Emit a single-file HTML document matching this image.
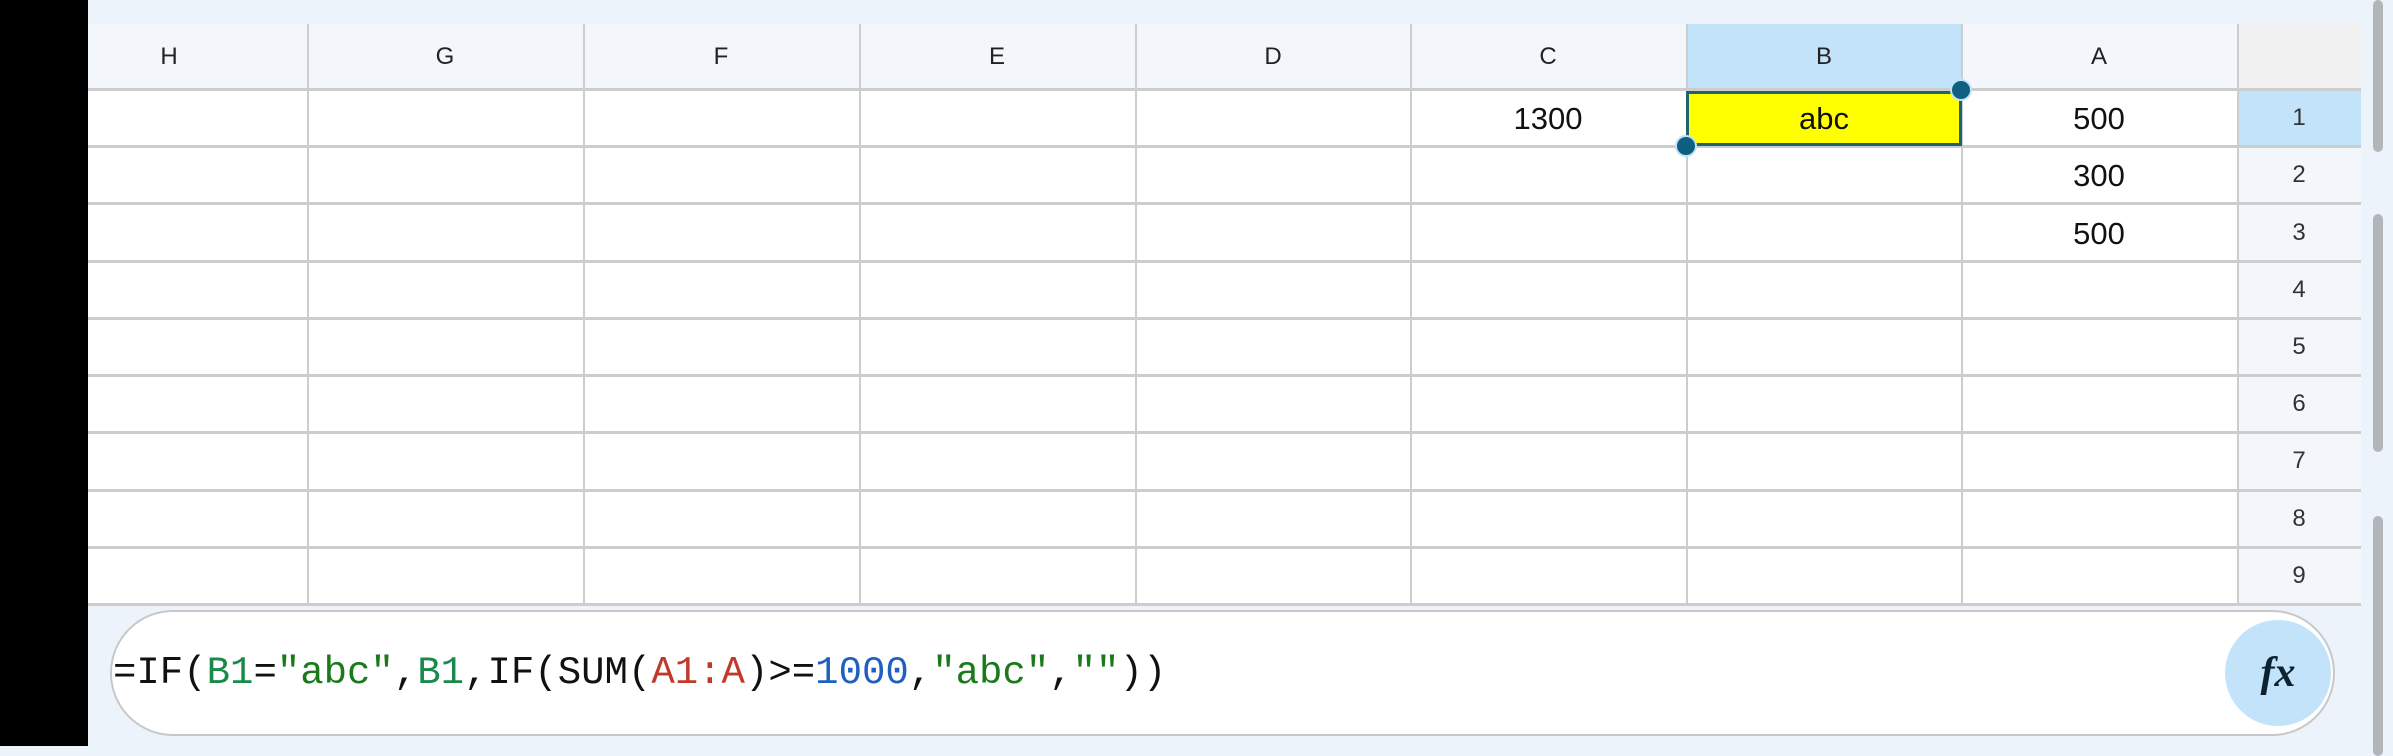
<!DOCTYPE html>
<html><head><style>
*{margin:0;padding:0;box-sizing:border-box}
body{width:2393px;height:746px;overflow:hidden;background:#edf3fb;position:relative;font-family:"Liberation Sans",sans-serif}
.a{position:absolute}
.hl{position:absolute;left:88px;width:2273px;height:3px;background:#cdcdcd}
.vl{position:absolute;top:24px;height:581px;width:2px;background:#cdcdcd}
.ch{position:absolute;top:24px;height:65px;line-height:65px;text-align:center;font-size:24px;color:#222;width:276px}
.rh{position:absolute;left:2237px;width:124px;text-align:center;font-size:24px;color:#333;height:57px;line-height:57px}
.cv{position:absolute;width:276px;text-align:center;font-size:31px;color:#111;height:57px;line-height:57px}
</style></head><body>
<div class="a" style="left:0;top:0;width:88px;height:746px;background:#000"></div>
<div class="a" style="left:88px;top:24px;width:2149px;height:65px;background:#f3f7fc"></div>
<div class="a" style="left:1686px;top:24px;width:275px;height:65px;background:#c3e3fb"></div>
<div class="a" style="left:88px;top:89px;width:2149px;height:516px;background:#fff"></div>
<div class="a" style="left:2237px;top:24px;width:124px;height:65px;background:#f1f1f1"></div>
<div class="a" style="left:2237px;top:89px;width:124px;height:516px;background:#f3f7fc"></div>
<div class="a" style="left:2237px;top:89px;width:124px;height:57px;background:#c3e3fb"></div>

<div class="ch" style="left:31px">H</div>
<div class="ch" style="left:307px">G</div>
<div class="ch" style="left:583px">F</div>
<div class="ch" style="left:859px">E</div>
<div class="ch" style="left:1135px">D</div>
<div class="ch" style="left:1410px">C</div>
<div class="ch" style="left:1686px">B</div>
<div class="ch" style="left:1961px">A</div>

<div class="hl" style="top:88px"></div>
<div class="hl" style="top:145px"></div>
<div class="hl" style="top:202px"></div>
<div class="hl" style="top:260px"></div>
<div class="hl" style="top:317px"></div>
<div class="hl" style="top:374px"></div>
<div class="hl" style="top:431px"></div>
<div class="hl" style="top:489px"></div>
<div class="hl" style="top:546px"></div>
<div class="hl" style="top:603px"></div>
<div class="vl" style="left:307px"></div>
<div class="vl" style="left:583px"></div>
<div class="vl" style="left:859px"></div>
<div class="vl" style="left:1135px"></div>
<div class="vl" style="left:1410px"></div>
<div class="vl" style="left:1686px"></div>
<div class="vl" style="left:1961px"></div>
<div class="vl" style="left:2237px"></div>

<div class="rh" style="top:89px">1</div>
<div class="rh" style="top:146px">2</div>
<div class="rh" style="top:204px">3</div>
<div class="rh" style="top:261px">4</div>
<div class="rh" style="top:318px">5</div>
<div class="rh" style="top:375px">6</div>
<div class="rh" style="top:432px">7</div>
<div class="rh" style="top:490px">8</div>
<div class="rh" style="top:547px">9</div>

<div class="a" style="left:1686px;top:91px;width:276px;height:55px;background:#ffff00;border:3px solid #1e6470"></div>
<div class="cv" style="left:1686px;top:90px">abc</div>
<div class="cv" style="left:1410px;top:90px">1300</div>
<div class="cv" style="left:1961px;top:90px">500</div>
<div class="cv" style="left:1961px;top:147px">300</div>
<div class="cv" style="left:1961px;top:205px">500</div>
<div class="a" style="left:1950px;top:79px;width:22px;height:22px;border-radius:50%;background:#0e5f82;border:2px solid #bfe3f7"></div>
<div class="a" style="left:1675px;top:135px;width:22px;height:22px;border-radius:50%;background:#0e5f82;border:2px solid #bfe3f7"></div>

<div class="a" style="left:2373px;top:0;width:10px;height:152px;border-radius:5px;background:#b3b6b9"></div>
<div class="a" style="left:2373px;top:214px;width:10px;height:238px;border-radius:5px;background:#b3b6b9"></div>
<div class="a" style="left:2373px;top:516px;width:10px;height:240px;border-radius:5px;background:#b3b6b9"></div>

<div class="a" style="left:110px;top:610px;width:2225px;height:126px;border-radius:63px;background:#fff;border:2px solid #c8c8c8"></div>
<div class="a" style="left:113px;top:644px;font-family:'Liberation Mono',monospace;font-size:39px;line-height:58px;color:#111;white-space:pre">=IF(<span style="color:#1a8a4a">B1</span>=<span style="color:#1a7a1a">"abc"</span>,<span style="color:#1a8a4a">B1</span>,IF(SUM(<span style="color:#c0392b">A1:A</span>)&gt;=<span style="color:#1e5fc0">1000</span>,<span style="color:#1a7a1a">"abc"</span>,<span style="color:#1a7a1a">""</span>))</div>
<div class="a" style="left:2225px;top:620px;width:106px;height:106px;border-radius:50%;background:#c3e3fb;text-align:center;line-height:106px;font-family:'Liberation Serif',serif;font-style:italic;font-weight:bold;font-size:42px;color:#0d2230">fx</div>
</body></html>
